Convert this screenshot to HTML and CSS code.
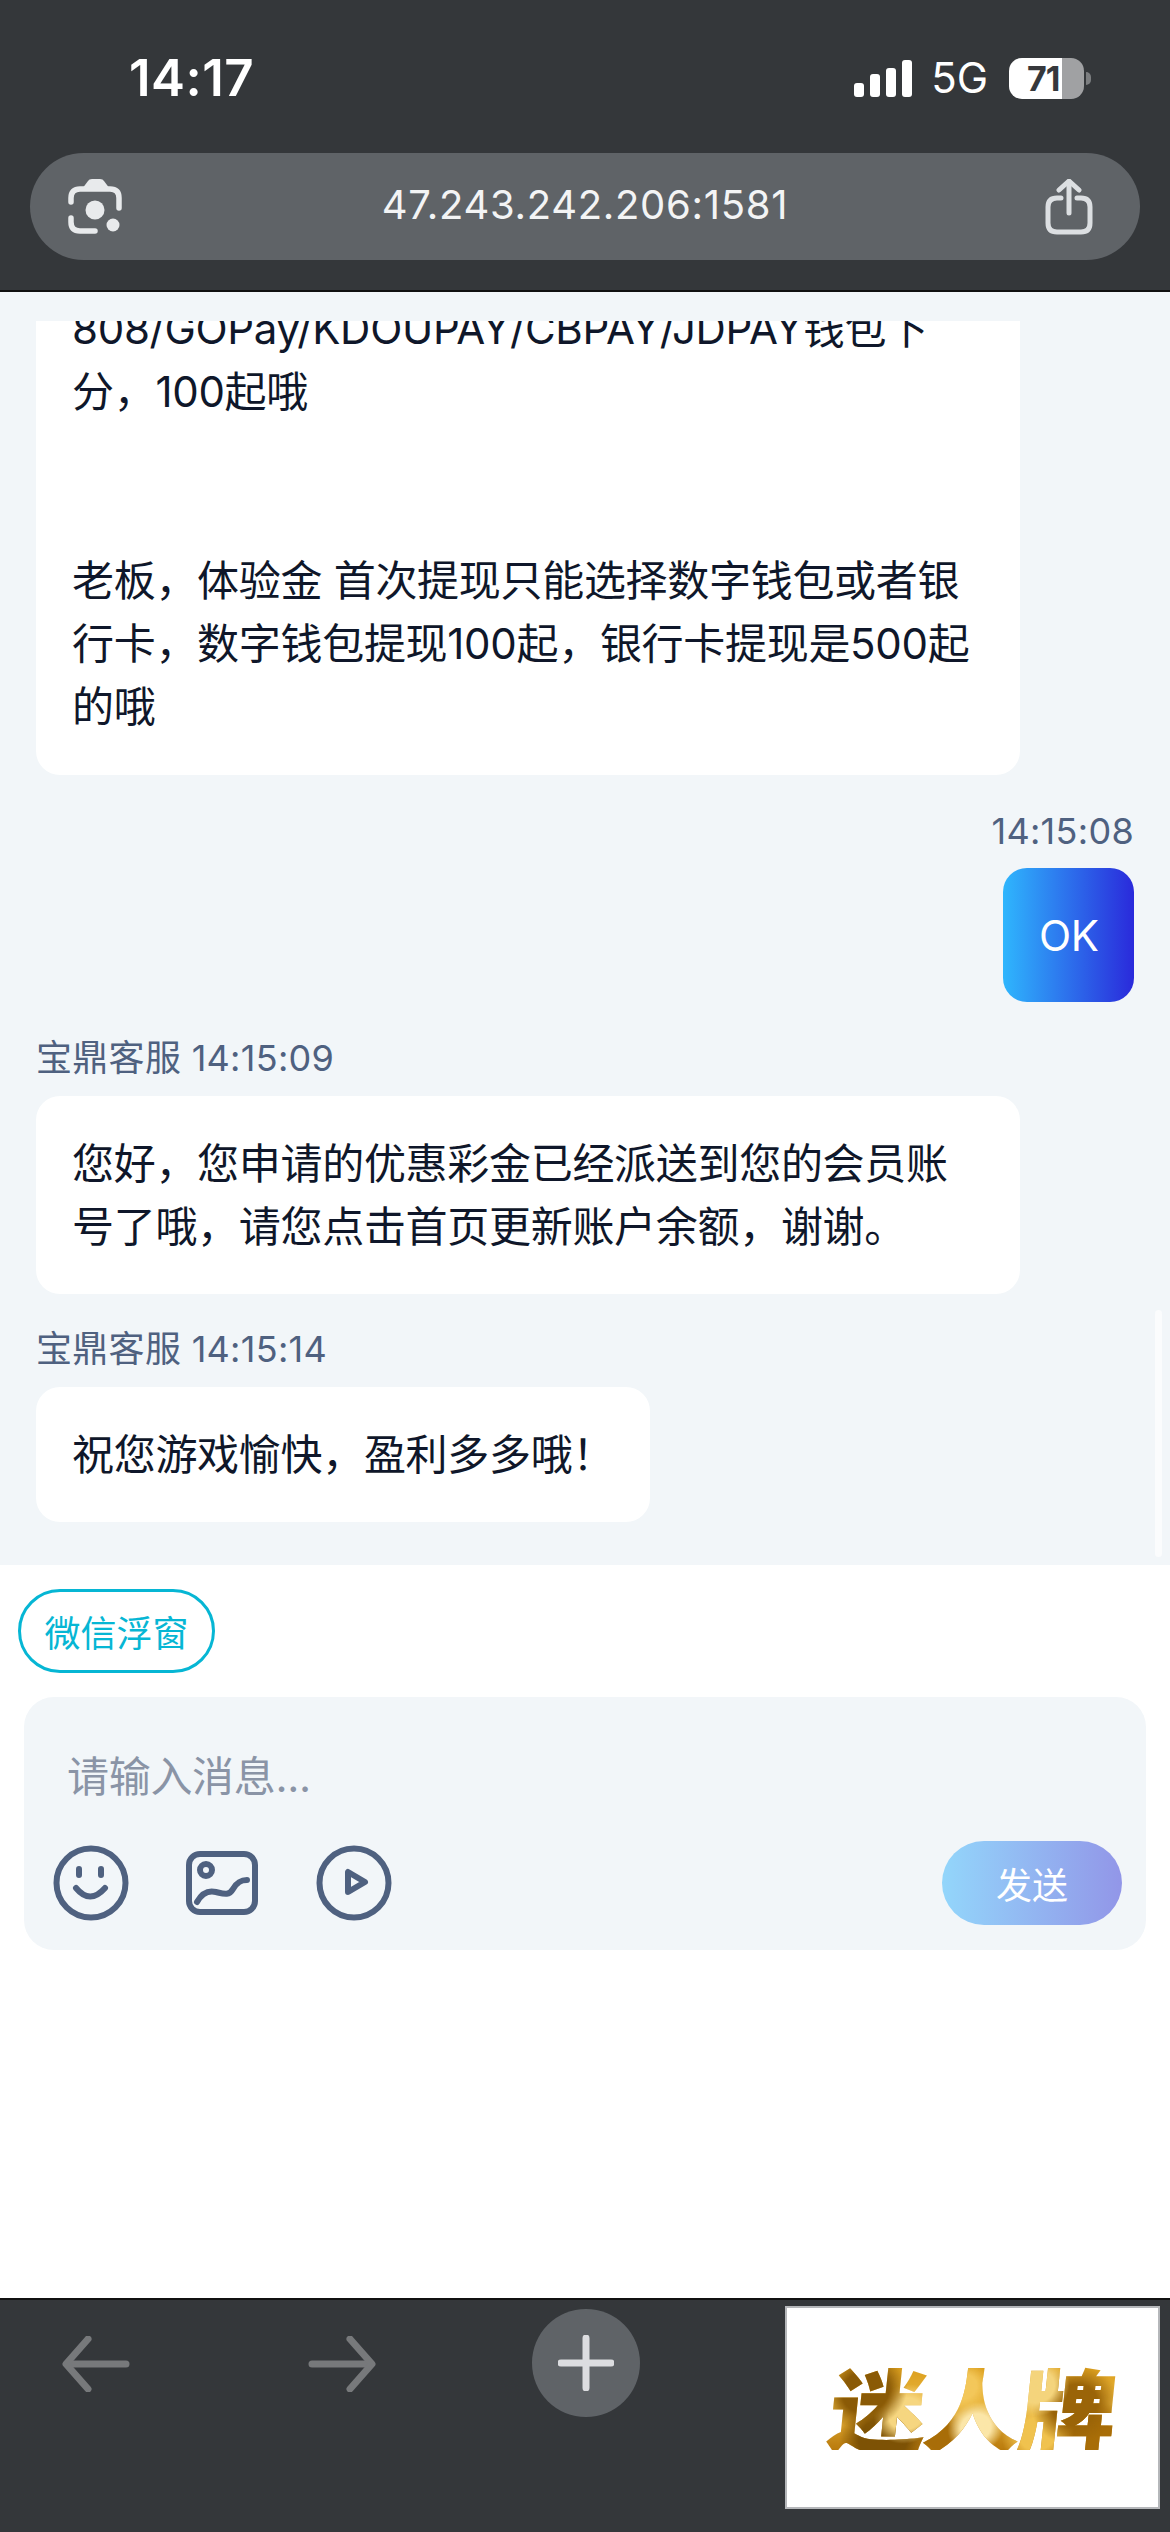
FILE: index.html
```html
<!DOCTYPE html>
<html lang="zh-CN">
<head>
<meta charset="utf-8">
<title>客服</title>
<link rel="stylesheet" href="styles.css">
</head>
<body>
<div class="phone">
  <header class="top">
    <div class="status">
      <span class="clock">14:17</span>
      <div class="status-right">
        <svg class="signal" width="58" height="37" viewBox="0 0 58 37"><rect x="0" y="23" width="10" height="14" rx="3"/><rect x="16" y="14" width="10" height="23" rx="3"/><rect x="32" y="8" width="10" height="29" rx="3"/><rect x="48" y="0" width="10" height="37" rx="3"/></svg>
        <span class="net">5G</span>
        <div class="battery"><div class="batt-body"><span class="batt-num">71</span></div><i class="batt-nub"></i></div>
      </div>
    </div>
    <div class="urlbar">
      <svg class="lens" width="54" height="55" viewBox="0 0 54 55" fill="none" stroke="#e8eaec" stroke-width="5.500" stroke-linecap="round"><path d="M3 23V19Q3 10 12 10H42Q51 10 51 19V29"/><path d="M3 39V43Q3 52 12 52H27"/><path d="M14 10L20 2Q21 0 24 0H32Q35 0 36 2L42 10Z" fill="#e8eaec" stroke="none"/><circle cx="27" cy="31" r="9.500" fill="#e8eaec" stroke="none"/><circle cx="45" cy="46" r="6.500" fill="#e8eaec" stroke="none"/></svg>
      <span class="url">47.243.242.206:1581</span>
      <svg class="share" width="48" height="56" viewBox="0 0 48 56" fill="none" stroke="#dcdfe2" stroke-width="5" stroke-linecap="round" stroke-linejoin="round"><path d="M24 3V34"/><path d="M14 11L24 2L34 11"/><path d="M16 19H12Q3 19 3 28V44Q3 53 12 53H36Q45 53 45 44V28Q45 19 36 19H32"/></svg>
    </div>
  </header>

  <main class="chat">
    <i class="thumb"></i>
    <div class="bubble clipped"><div class="clip-inner">808/GOPay/KDOUPAY/CBPAY/JDPAY钱包下分，100起哦<br><br><br>老板，体验金 首次提现只能选择数字钱包或者银行卡，数字钱包提现100起，银行卡提现是500起的哦</div></div>
    <div class="meta mine">14:15:08</div>
    <div class="bubble out">OK</div>
    <div class="meta first">宝鼎客服 14:15:09</div>
    <div class="bubble">您好，您申请的优惠彩金已经派送到您的会员账号了哦，请您点击首页更新账户余额，谢谢。</div>
    <div class="meta">宝鼎客服 14:15:14</div>
    <div class="bubble">祝您游戏愉快，盈利多多哦！</div>
  </main>

  <section class="composer">
    <button class="tag">微信浮窗</button>
    <div class="inputbox">
      <div class="placeholder">请输入消息...</div>
      <div class="tools">
        <svg class="ico" width="76" height="76" viewBox="0 0 76 76" fill="none" stroke="#4f6180" stroke-width="6" stroke-linecap="round"><circle cx="38" cy="38" r="34.500"/><path d="M26 24V30M48 24V30"/><path d="M23 43Q37 60 52 43"/></svg>
        <svg class="ico ico-img" width="72" height="64" viewBox="0 0 72 64" fill="none" stroke="#4f6180" stroke-width="6" stroke-linecap="round"><rect x="3" y="3" width="66" height="58" rx="11"/><circle cx="20" cy="19" r="6"/><path d="M11 51C16 42 22 39 30 41C38 43 43 45 47 38C51 31 55 29 61 29"/></svg>
        <svg class="ico ico-play" width="76" height="76" viewBox="0 0 76 76" fill="none" stroke="#4f6180" stroke-width="6" stroke-linecap="round" stroke-linejoin="round"><circle cx="38" cy="38" r="34.500"/><path d="M32 27V47L49 37Z"/></svg>
        <button class="send">发送</button>
      </div>
    </div>
  </section>

  <footer class="bottom">
    <svg class="arrow back" width="68" height="56" viewBox="0 0 68 56" fill="none" stroke="#77797b" stroke-width="7" stroke-linecap="round" stroke-linejoin="round"><path d="M64 28H5"/><path d="M26 3L4 28L26 53"/></svg>
    <svg class="arrow fwd" width="68" height="56" viewBox="0 0 68 56" fill="none" stroke="#77797b" stroke-width="7" stroke-linecap="round" stroke-linejoin="round"><path d="M4 28H63"/><path d="M42 3L64 28L42 53"/></svg>
    <div class="plus"><svg width="56" height="56" viewBox="0 0 56 56" stroke="#dcdde0" stroke-width="7" stroke-linecap="round"><path d="M28 3V53M3 28H53"/></svg></div>
    <div class="ad"><span class="ad-text">迷人牌</span></div>
  </footer>
</div>
</body>
</html>
```

FILE: styles.css
```css
* { box-sizing: border-box; }
html, body { margin: 0; padding: 0; }
body { width: 1170px; height: 2532px; overflow: hidden; background: #fff; font-family: Inter, "Noto Sans CJK SC", sans-serif; }
.phone { width: 1170px; height: 2532px; display: flex; flex-direction: column; }

.top { height: 292px; background: #34373a; border-bottom: 2px solid #111; padding: 0 30px; flex: none; }
.status { height: 153px; display: flex; justify-content: space-between; align-items: flex-start; padding: 50px 49px 0 99px; color: #fff; }
.clock { font-size: 51px; font-weight: 600; line-height: 56px; letter-spacing: .5px; }
.status-right { display: flex; align-items: center; height: 56px; }
.signal { fill: #fff; margin-right: 19px; }
.net { font-size: 42px; font-weight: 400; line-height: 56px; margin-right: 21px; }
.battery { display: flex; align-items: center; }
.batt-body { width: 75px; height: 41px; border-radius: 13px; background: linear-gradient(90deg, #fff 0 71%, #a0a1a3 71% 100%); display: flex; align-items: center; padding-left: 18px; }
.batt-num { font-size: 34px; font-weight: 700; color: #36383c; line-height: 41px; letter-spacing: -1px; }
.batt-nub { width: 5px; height: 13px; background: #7c7e80; border-radius: 0 6px 6px 0; margin-left: 2px; }

.urlbar { height: 107px; border-radius: 54px; background: #5f6367; display: flex; align-items: center; justify-content: space-between; padding: 0 47px 0 38px; }
.url { font-size: 40px; color: #f3f4f5; letter-spacing: .7px; margin: -5px 0 0 3px; }

.chat { position: relative; height: 1273px; flex: none; background: #f2f6f9; padding: 29px 36px 0; overflow: hidden; display: flex; flex-direction: column; align-items: flex-start; }
.thumb { position: absolute; right: 8px; top: 1018px; width: 7px; height: 247px; border-radius: 4px; background: #fbfcfd; }
.bubble { background: #fff; border-radius: 24px; padding: 36px; max-width: 984px; font-size: 42px; line-height: 63px; letter-spacing: -.3px; color: #0f172a; }
.clipped { height: 454px; width: 984px; padding: 0 36px; overflow: hidden; border-radius: 0 0 24px 24px; }
.clip-inner { margin-top: -24px; }
.meta { font-size: 36px; line-height: 54px; letter-spacing: .3px; color: #4f6180; margin: 28px 0 11px; }
.meta.mine { align-self: flex-end; margin: 29px 0 10px; }
.meta.first { margin-top: 29px; }
.out { align-self: flex-end; background: linear-gradient(90deg, #2fb6fd, #2a2adb); color: #fff; height: 134px; width: 131px; }

.composer { flex: none; padding: 24px 24px 0 18px; height: 733px; }
.tag { display: block; width: 197px; height: 84px; border: 3px solid #06b6d4; border-radius: 42px; background: #fff; color: #06b6d4; font: 400 36px Inter, "Noto Sans CJK SC", sans-serif; padding: 0; }
.inputbox { margin: 24px 0 0 6px; height: 253px; width: 1122px; border-radius: 30px; background: #f2f6f9; padding: 50px 24px 0 29px; }
.placeholder { font-size: 42px; line-height: 60px; letter-spacing: -.3px; color: #8a94a6; margin-left: 14px; }
.tools { display: flex; align-items: center; margin-top: 34px; height: 84px; }
.ico { flex: none; }
.ico-img { margin-left: 57px; }
.ico-play { margin-left: 58px; }
.send { margin-left: auto; width: 180px; height: 84px; border: 0; border-radius: 42px; background: linear-gradient(90deg, #93d6fb, #9296e8); color: #fff; font: 400 36px Inter, "Noto Sans CJK SC", sans-serif; padding: 0; }

.bottom { flex: none; height: 235px; background: #34373a; border-top: 2px solid #111; display: flex; align-items: flex-start; padding: 36px 10px 0 62px; }
.arrow { flex: none; }
.fwd { margin-left: 178px; }
.plus { width: 108px; height: 108px; border-radius: 50%; background: #5f6367; display: flex; align-items: center; justify-content: center; margin: -27px 0 0 156px; flex: none; }
.ad { margin: -30px 0 0 auto; width: 375px; height: 203px; background: #fff; border: 2px solid #b5b7ba; display: flex; align-items: center; justify-content: center; }
.ad-text { font: 900 98px/1 "Noto Sans CJK SC", sans-serif; letter-spacing: -3px; margin-top: -6px; transform: skewX(-6deg) scaleY(.92); background-color: #c88a12; background-image: radial-gradient(circle at 12% 35%, #8a5a06 0 9%, transparent 16%), radial-gradient(circle at 27% 60%, #f6d680 0 8%, transparent 15%), radial-gradient(circle at 20% 88%, #7d5205 0 10%, transparent 18%), radial-gradient(circle at 46% 30%, #f3c75a 0 8%, transparent 16%), radial-gradient(circle at 52% 75%, #fbe6a8 0 9%, transparent 17%), radial-gradient(circle at 40% 85%, #a86d08 0 7%, transparent 14%), radial-gradient(circle at 72% 30%, #f4d47c 0 8%, transparent 15%), radial-gradient(circle at 86% 50%, #9a6408 0 9%, transparent 17%), radial-gradient(circle at 74% 82%, #f0c24e 0 8%, transparent 16%), radial-gradient(circle at 93% 85%, #a86d08 0 7%, transparent 14%), linear-gradient(180deg, #d99a16, #e9b63f 50%, #b97a0c); -webkit-background-clip: text; background-clip: text; color: transparent; }
```
